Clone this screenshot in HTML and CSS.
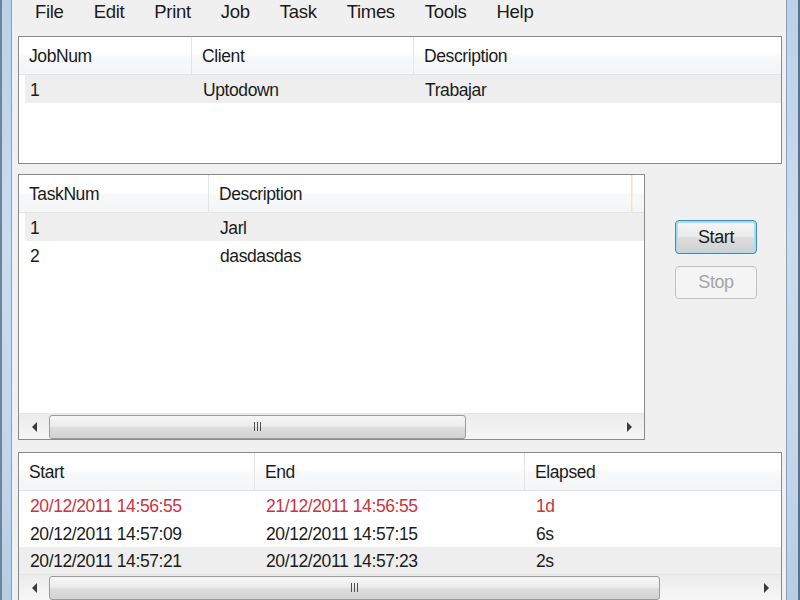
FILE: index.html
```html
<html>

<head>
  <link rel="stylesheet" href="styles.css">
</head>

<body>
  <div class="window">
    <div class="frame frame-left"></div>

    <div class="client">
      <div class="menubar">
        <span>File</span>
        <span>Edit</span>
        <span>Print</span>
        <span>Job</span>
        <span>Task</span>
        <span>Times</span>
        <span>Tools</span>
        <span>Help</span>
      </div>

      <!-- jobs -->
      <div class="listview jobs">
        <div class="lv-head">
          <div class="col">JobNum</div>
          <div class="col">Client</div>
          <div class="col">Description</div>
        </div>
        <div class="lv-row inset hot">
          <div class="cell">1</div>
          <div class="cell">Uptodown</div>
          <div class="cell">Trabajar</div>
        </div>
      </div>

      <div class="middle">
        <!-- tasks -->
        <div class="listview tasks">
          <div class="lv-head">
            <div class="col">TaskNum</div>
            <div class="col">Description</div>
            <div class="col stub"></div>
          </div>
          <div class="lv-row inset hot">
            <div class="cell">1</div>
            <div class="cell">Jarl</div>
          </div>
          <div class="lv-row inset">
            <div class="cell">2</div>
            <div class="cell">dasdasdas</div>
          </div>
          <div class="filler"></div>
          <div class="hscroll">
            <div class="arrow left"></div>
            <div class="track">
              <div class="thumb"><span class="grip"><i></i><i></i><i></i></span></div>
            </div>
            <div class="arrow right"></div>
          </div>
        </div>

        <div class="buttons">
          <button class="btn focus">Start</button>
          <button class="btn" disabled>Stop</button>
        </div>
      </div>

      <!-- times -->
      <div class="listview times">
        <div class="lv-head">
          <div class="col">Start</div>
          <div class="col">End</div>
          <div class="col">Elapsed</div>
        </div>
        <div class="lv-row late">
          <div class="cell">20/12/2011 14:56:55</div>
          <div class="cell">21/12/2011 14:56:55</div>
          <div class="cell">1d</div>
        </div>
        <div class="lv-row">
          <div class="cell">20/12/2011 14:57:09</div>
          <div class="cell">20/12/2011 14:57:15</div>
          <div class="cell">6s</div>
        </div>
        <div class="lv-row hot short">
          <div class="cell">20/12/2011 14:57:21</div>
          <div class="cell">20/12/2011 14:57:23</div>
          <div class="cell">2s</div>
        </div>
        <div class="hscroll">
          <div class="arrow left"></div>
          <div class="track">
            <div class="thumb wide"><span class="grip"><i></i><i></i><i></i></span></div>
          </div>
          <div class="arrow right"></div>
        </div>
      </div>
    </div>

    <div class="frame frame-right"></div>
  </div>
</body>

</html>
```

FILE: styles.css
```css
body {
  margin: 0;
  font-family: "Liberation Sans", Arial, sans-serif;
  color: #1b1b1b;
  background: #f0f0f0;
}

.window {
  display: flex;
  width: 800px;
  height: 600px;
  overflow: hidden;
}

/* aero window frame */
.frame {
  flex: none;
  background: linear-gradient(to bottom, #b9d1ea 0%, #c9dcf0 40%, #c2d7ec 75%, #b6cde6 100%);
}

.frame-left {
  width: 9px;
  border-left: 2px solid #6f8499;
  border-right: 1px solid #8b9fb5;
}

.frame-right {
  width: 11px;
  border-left: 1px solid #8b9fb5;
  border-right: 2px solid #5d7188;
}

.client {
  flex: 1;
  display: flex;
  flex-direction: column;
  background: #f0f0f0;
}

.client > * {
  flex: none;
}

/* menu */
.menubar {
  height: 30px;
  display: flex;
  align-items: flex-start;
  padding-left: 8px;
  font-size: 18.5px;
  letter-spacing: -0.3px;
}

.menubar span {
  padding: 1px 15px 0 15px;
}

/* list views */
.listview {
  box-sizing: border-box;
  border: 1px solid #8a8a8a;
  background: #fff;
  display: flex;
  flex-direction: column;
  font-size: 17.5px;
  letter-spacing: -0.4px;
  overflow: hidden;
}

.lv-head {
  display: flex;
  flex: none;
  height: 37px;
  border-bottom: 1px solid #e3e4e6;
  background: linear-gradient(to bottom, #ffffff 0%, #ffffff 45%, #f7f8f9 55%, #f4f5f7 100%);
}

.lv-head .col {
  box-sizing: border-box;
  padding: 2px 0 0 10px;
  line-height: 35px;
  border-right: 1px solid #e5e5e5;
}

.lv-head .col:last-child {
  border-right: none;
  flex: 1;
}

.lv-row {
  display: flex;
  flex: none;
  height: 28px;
  line-height: 26px;
  padding-top: 2px;
  box-sizing: border-box;
}

.lv-row.short {
  height: 27px;
  line-height: 25px;
}

.lv-row .cell {
  box-sizing: border-box;
  padding-left: 11px;
  white-space: nowrap;
}

.lv-row.inset {
  margin-left: 6px;
}

.lv-row.inset .cell:first-child {
  padding-left: 5px;
}

.lv-row.hot {
  background: #eeeeee;
}

.lv-row.late {
  color: #cc3340;
}

.lv-row .cell:last-child {
  flex: 1;
}

/* column widths */
.jobs {
  height: 128px;
  margin: 6px 4px 0 6px;
}

.jobs .col:nth-child(1),
.jobs .cell:nth-child(1) {
  width: 173px;
}

.jobs .col:nth-child(2),
.jobs .cell:nth-child(2) {
  width: 222px;
}

.jobs .lv-row.inset .cell:nth-child(1) {
  width: 167px;
}

.middle {
  display: flex;
  margin-top: 10px;
}

.tasks {
  width: 627px;
  height: 266px;
  margin-left: 6px;
}

.tasks .col:nth-child(1) {
  width: 190px;
}

.tasks .col:nth-child(2) {
  width: 423px;
}

.tasks .col.stub {
  border-left: 1px solid #f6efdc;
}

.tasks .cell:nth-child(1) {
  width: 184px;
}

.filler {
  flex: 1;
}

.times {
  height: 200px;
  margin: 12px 4px 0 6px;
}

.times .col:nth-child(1),
.times .cell:nth-child(1) {
  width: 236px;
}

.times .col:nth-child(2),
.times .cell:nth-child(2) {
  width: 270px;
}

/* horizontal scrollbar */
.hscroll {
  flex: none;
  height: 26px;
  display: flex;
  align-items: center;
  background: linear-gradient(to bottom, #ececec, #f6f6f6);
  border-top: 1px solid #e6e6e6;
  box-sizing: border-box;
}

.arrow {
  width: 30px;
  height: 100%;
  display: flex;
  align-items: center;
  justify-content: center;
  flex: none;
}

.arrow.left::before {
  content: "";
  border-top: 5px solid transparent;
  border-bottom: 5px solid transparent;
  border-right: 5px solid #3a3a3a;
}

.arrow.right::before {
  content: "";
  border-top: 5px solid transparent;
  border-bottom: 5px solid transparent;
  border-left: 5px solid #3a3a3a;
}

.track {
  flex: 1;
  height: 100%;
  display: flex;
  align-items: center;
}

.thumb {
  box-sizing: border-box;
  width: 417px;
  height: 24px;
  border: 1px solid #9b9b9b;
  border-radius: 3px;
  background: linear-gradient(to bottom, #f7f7f7 0%, #ececec 45%, #dcdcdc 55%, #d2d2d2 100%);
  display: flex;
  align-items: center;
  justify-content: center;
}

.thumb.wide {
  width: 611px;
}

.grip {
  display: flex;
  gap: 2px;
}

.grip i {
  display: block;
  width: 1px;
  height: 9px;
  background: #4f4f4f;
}

/* buttons */
.buttons {
  display: flex;
  flex-direction: column;
  margin-left: 30px;
  padding-top: 46px;
}

.btn {
  width: 82px;
  height: 34px;
  font-family: "Liberation Sans", Arial, sans-serif;
  font-size: 18px;
  letter-spacing: -0.4px;
  color: #1b1b1b;
  border: 1px solid #3d8ab2;
  border-radius: 4px;
  background: linear-gradient(to bottom, #f6f6f6 0%, #ebebeb 48%, #dddddd 52%, #d0d0d0 100%);
  box-shadow: inset 0 0 0 2px #a9dcf2;
  padding: 0;
}

.btn[disabled] {
  height: 33px;
  margin-top: 12px;
  color: #a4a4a4;
  border-color: #c2c2c2;
  background: #f4f4f4;
  box-shadow: none;
}
```
